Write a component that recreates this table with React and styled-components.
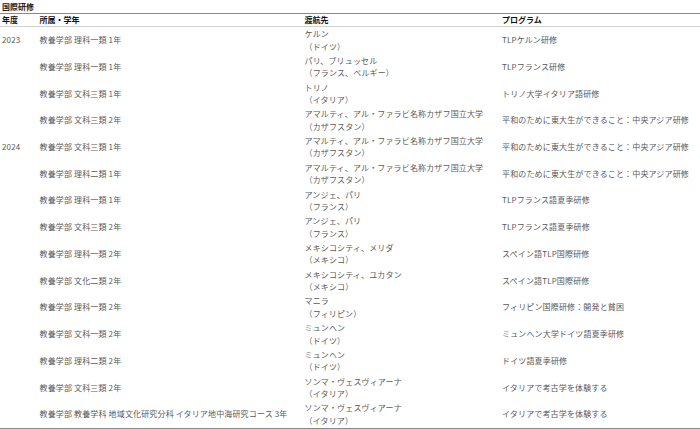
import React from "react";
import styled, { createGlobalStyle } from "styled-components";

const Global = createGlobalStyle`
  html, body { margin: 0; padding: 0; background: #fff; }
  body { font-family: "Noto Sans CJK JP", "Noto Sans", sans-serif; }
`;

const Page = styled.div`
  width: 700px;
  display: flex;
  flex-direction: column;
`;

const Title = styled.div`
  font-size: 8px;
  font-weight: 700;
  color: #222;
  line-height: 13px;
  height: 13px;
  padding-left: 2px;
  border-bottom: 1px solid #8a8a8a;
`;

const cols = "37.5px 265px 197.5px 1fr";

const HeaderRow = styled.div`
  display: grid;
  grid-template-columns: ${cols};
  height: 12px;
  align-items: center;
  border-bottom: 1px solid #cfcfcf;
`;

const HeadCell = styled.div`
  font-size: 8px;
  font-weight: 700;
  color: #111;
  line-height: 12px;
  padding-left: 2px;
`;

const Body = styled.div`
  display: flex;
  flex-direction: column;
  border-bottom: 1.5px solid #8a8a8a;
`;

const Row = styled.div`
  display: grid;
  grid-template-columns: ${cols};
  height: 26.73px;
  align-items: center;
`;

const Cell = styled.div`
  font-size: 8px;
  color: #5a5a5a;
  line-height: 12.4px;
  letter-spacing: 0.15px;
  padding-left: 2px;
  white-space: nowrap;
`;

const Dest = styled(Cell)`
  display: flex;
  flex-direction: column;
  padding-top: 0.5px;
`;

const rows = [
  ["2023", "教養学部 理科一類 1年", "ケルン", "（ドイツ）", "TLPケルン研修"],
  ["", "教養学部 理科一類 1年", "パリ、ブリュッセル", "（フランス、ベルギー）", "TLPフランス研修"],
  ["", "教養学部 文科三類 1年", "トリノ", "（イタリア）", "トリノ大学イタリア語研修"],
  ["", "教養学部 文科三類 2年", "アマルティ、アル・ファラビ名称カザフ国立大学", "（カザフスタン）", "平和のために東大生ができること：中央アジア研修"],
  ["2024", "教養学部 文科三類 1年", "アマルティ、アル・ファラビ名称カザフ国立大学", "（カザフスタン）", "平和のために東大生ができること：中央アジア研修"],
  ["", "教養学部 理科二類 1年", "アマルティ、アル・ファラビ名称カザフ国立大学", "（カザフスタン）", "平和のために東大生ができること：中央アジア研修"],
  ["", "教養学部 理科一類 1年", "アンジェ、パリ", "（フランス）", "TLPフランス語夏季研修"],
  ["", "教養学部 文科三類 2年", "アンジェ、パリ", "（フランス）", "TLPフランス語夏季研修"],
  ["", "教養学部 理科一類 2年", "メキシコシティ、メリダ", "（メキシコ）", "スペイン語TLP国際研修"],
  ["", "教養学部 文化二類 2年", "メキシコシティ、ユカタン", "（メキシコ）", "スペイン語TLP国際研修"],
  ["", "教養学部 理科一類 2年", "マニラ", "（フィリピン）", "フィリピン国際研修：開発と貧困"],
  ["", "教養学部 文科一類 2年", "ミュンヘン", "（ドイツ）", "ミュンヘン大学ドイツ語夏季研修"],
  ["", "教養学部 理科二類 2年", "ミュンヘン", "（ドイツ）", "ドイツ語夏季研修"],
  ["", "教養学部 文科三類 2年", "ソンマ・ヴェスヴィアーナ", "（イタリア）", "イタリアで考古学を体験する"],
  ["", "教養学部 教養学科 地域文化研究分科 イタリア地中海研究コース 3年", "ソンマ・ヴェスヴィアーナ", "（イタリア）", "イタリアで考古学を体験する"],
];

export default function App() {
  return (
    <>
      <Global />
      <Page>
        <Title>国際研修</Title>
        <HeaderRow>
          <HeadCell>年度</HeadCell>
          <HeadCell>所属・学年</HeadCell>
          <HeadCell>渡航先</HeadCell>
          <HeadCell>プログラム</HeadCell>
        </HeaderRow>
        <Body>
          {rows.map((r, i) => (
            <Row key={i}>
              <Cell>{r[0]}</Cell>
              <Cell>{r[1]}</Cell>
              <Dest>
                <span>{r[2]}</span>
                <span>{r[3]}</span>
              </Dest>
              <Cell>{r[4]}</Cell>
            </Row>
          ))}
        </Body>
      </Page>
    </>
  );
}
